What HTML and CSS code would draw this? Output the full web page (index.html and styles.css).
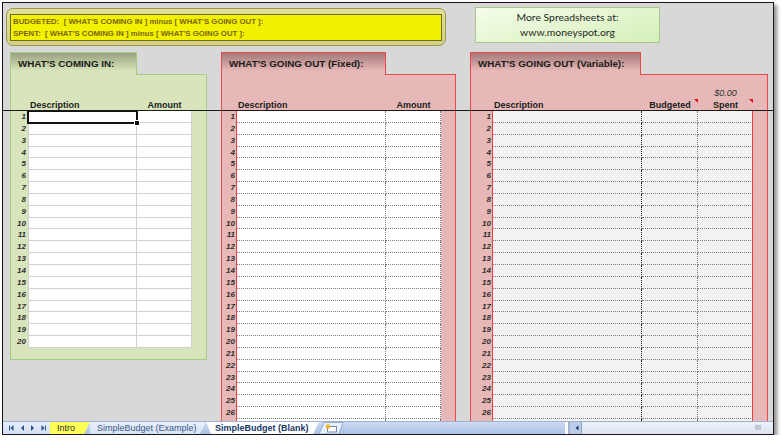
FILE: index.html
```html
<!DOCTYPE html>
<html>
<head>
<meta charset="utf-8">
<title>SimpleBudget (Blank)</title>
<link rel="stylesheet" href="styles.css">
</head>
<body>
<div class="window">
  <div class="sheet">
    <div class="top">
      <div class="formula">
        <div class="formula-inner">
          <div>BUDGETED:&nbsp; [ WHAT'S COMING IN ] minus [ WHAT'S GOING OUT ]:</div>
          <div>SPENT:&nbsp; [ WHAT'S COMING IN ] minus [ WHAT'S GOING OUT ]:</div>
        </div>
      </div>
      <div class="promo">
        <div>More Spreadsheets at:</div>
        <div>www.moneyspot.org</div>
      </div>
    </div>

    <div class="panels">
      <section class="panel income">
        <div class="tab">WHAT'S COMING IN:</div>
        <div class="body">
          <div class="head"><span></span><span class="hd">Description</span><span class="ha">Amount</span></div>
          <div class="rows">
            <div class="r"><span class="n">1</span><span class="c d active"></span><span class="c"></span></div>
            <div class="r"><span class="n">2</span><span class="c d"></span><span class="c"></span></div>
            <div class="r"><span class="n">3</span><span class="c d"></span><span class="c"></span></div>
            <div class="r"><span class="n">4</span><span class="c d"></span><span class="c"></span></div>
            <div class="r"><span class="n">5</span><span class="c d"></span><span class="c"></span></div>
            <div class="r"><span class="n">6</span><span class="c d"></span><span class="c"></span></div>
            <div class="r"><span class="n">7</span><span class="c d"></span><span class="c"></span></div>
            <div class="r"><span class="n">8</span><span class="c d"></span><span class="c"></span></div>
            <div class="r"><span class="n">9</span><span class="c d"></span><span class="c"></span></div>
            <div class="r"><span class="n">10</span><span class="c d"></span><span class="c"></span></div>
            <div class="r"><span class="n">11</span><span class="c d"></span><span class="c"></span></div>
            <div class="r"><span class="n">12</span><span class="c d"></span><span class="c"></span></div>
            <div class="r"><span class="n">13</span><span class="c d"></span><span class="c"></span></div>
            <div class="r"><span class="n">14</span><span class="c d"></span><span class="c"></span></div>
            <div class="r"><span class="n">15</span><span class="c d"></span><span class="c"></span></div>
            <div class="r"><span class="n">16</span><span class="c d"></span><span class="c"></span></div>
            <div class="r"><span class="n">17</span><span class="c d"></span><span class="c"></span></div>
            <div class="r"><span class="n">18</span><span class="c d"></span><span class="c"></span></div>
            <div class="r"><span class="n">19</span><span class="c d"></span><span class="c"></span></div>
            <div class="r"><span class="n">20</span><span class="c d"></span><span class="c"></span></div>
          </div>
        </div>
      </section>

      <section class="panel fixed">
        <div class="tab">WHAT'S GOING OUT (Fixed):</div>
        <div class="body">
          <div class="head"><span></span><span class="hd">Description</span><span class="ha">Amount</span></div>
          <div class="rows">
            <div class="r"><span class="n">1</span><span class="c d"></span><span class="c"></span></div>
            <div class="r"><span class="n">2</span><span class="c d"></span><span class="c"></span></div>
            <div class="r"><span class="n">3</span><span class="c d"></span><span class="c"></span></div>
            <div class="r"><span class="n">4</span><span class="c d"></span><span class="c"></span></div>
            <div class="r"><span class="n">5</span><span class="c d"></span><span class="c"></span></div>
            <div class="r"><span class="n">6</span><span class="c d"></span><span class="c"></span></div>
            <div class="r"><span class="n">7</span><span class="c d"></span><span class="c"></span></div>
            <div class="r"><span class="n">8</span><span class="c d"></span><span class="c"></span></div>
            <div class="r"><span class="n">9</span><span class="c d"></span><span class="c"></span></div>
            <div class="r"><span class="n">10</span><span class="c d"></span><span class="c"></span></div>
            <div class="r"><span class="n">11</span><span class="c d"></span><span class="c"></span></div>
            <div class="r"><span class="n">12</span><span class="c d"></span><span class="c"></span></div>
            <div class="r"><span class="n">13</span><span class="c d"></span><span class="c"></span></div>
            <div class="r"><span class="n">14</span><span class="c d"></span><span class="c"></span></div>
            <div class="r"><span class="n">15</span><span class="c d"></span><span class="c"></span></div>
            <div class="r"><span class="n">16</span><span class="c d"></span><span class="c"></span></div>
            <div class="r"><span class="n">17</span><span class="c d"></span><span class="c"></span></div>
            <div class="r"><span class="n">18</span><span class="c d"></span><span class="c"></span></div>
            <div class="r"><span class="n">19</span><span class="c d"></span><span class="c"></span></div>
            <div class="r"><span class="n">20</span><span class="c d"></span><span class="c"></span></div>
            <div class="r"><span class="n">21</span><span class="c d"></span><span class="c"></span></div>
            <div class="r"><span class="n">22</span><span class="c d"></span><span class="c"></span></div>
            <div class="r"><span class="n">23</span><span class="c d"></span><span class="c"></span></div>
            <div class="r"><span class="n">24</span><span class="c d"></span><span class="c"></span></div>
            <div class="r"><span class="n">25</span><span class="c d"></span><span class="c"></span></div>
            <div class="r"><span class="n">26</span><span class="c d"></span><span class="c"></span></div>
            <div class="r"><span class="n"></span><span class="c d"></span><span class="c"></span></div>
          </div>
        </div>
      </section>

      <section class="panel var">
        <div class="tab">WHAT'S GOING OUT (Variable):</div>
        <div class="body">
          <div class="head">
            <span></span>
            <span class="hd">Description</span>
            <span class="ha"><span class="tri">Budgeted</span></span>
            <span class="ha spent"><span class="cur">$0.00</span><span class="tri">Spent</span></span>
          </div>
          <div class="rows">
            <div class="r"><span class="n">1</span><span class="c d"></span><span class="c"></span><span class="c s"></span></div>
            <div class="r"><span class="n">2</span><span class="c d"></span><span class="c"></span><span class="c s"></span></div>
            <div class="r"><span class="n">3</span><span class="c d"></span><span class="c"></span><span class="c s"></span></div>
            <div class="r"><span class="n">4</span><span class="c d"></span><span class="c"></span><span class="c s"></span></div>
            <div class="r"><span class="n">5</span><span class="c d"></span><span class="c"></span><span class="c s"></span></div>
            <div class="r"><span class="n">6</span><span class="c d"></span><span class="c"></span><span class="c s"></span></div>
            <div class="r"><span class="n">7</span><span class="c d"></span><span class="c"></span><span class="c s"></span></div>
            <div class="r"><span class="n">8</span><span class="c d"></span><span class="c"></span><span class="c s"></span></div>
            <div class="r"><span class="n">9</span><span class="c d"></span><span class="c"></span><span class="c s"></span></div>
            <div class="r"><span class="n">10</span><span class="c d"></span><span class="c"></span><span class="c s"></span></div>
            <div class="r"><span class="n">11</span><span class="c d"></span><span class="c"></span><span class="c s"></span></div>
            <div class="r"><span class="n">12</span><span class="c d"></span><span class="c"></span><span class="c s"></span></div>
            <div class="r"><span class="n">13</span><span class="c d"></span><span class="c"></span><span class="c s"></span></div>
            <div class="r"><span class="n">14</span><span class="c d"></span><span class="c"></span><span class="c s"></span></div>
            <div class="r"><span class="n">15</span><span class="c d"></span><span class="c"></span><span class="c s"></span></div>
            <div class="r"><span class="n">16</span><span class="c d"></span><span class="c"></span><span class="c s"></span></div>
            <div class="r"><span class="n">17</span><span class="c d"></span><span class="c"></span><span class="c s"></span></div>
            <div class="r"><span class="n">18</span><span class="c d"></span><span class="c"></span><span class="c s"></span></div>
            <div class="r"><span class="n">19</span><span class="c d"></span><span class="c"></span><span class="c s"></span></div>
            <div class="r"><span class="n">20</span><span class="c d"></span><span class="c"></span><span class="c s"></span></div>
            <div class="r"><span class="n">21</span><span class="c d"></span><span class="c"></span><span class="c s"></span></div>
            <div class="r"><span class="n">22</span><span class="c d"></span><span class="c"></span><span class="c s"></span></div>
            <div class="r"><span class="n">23</span><span class="c d"></span><span class="c"></span><span class="c s"></span></div>
            <div class="r"><span class="n">24</span><span class="c d"></span><span class="c"></span><span class="c s"></span></div>
            <div class="r"><span class="n">25</span><span class="c d"></span><span class="c"></span><span class="c s"></span></div>
            <div class="r"><span class="n">26</span><span class="c d"></span><span class="c"></span><span class="c s"></span></div>
            <div class="r"><span class="n"></span><span class="c d"></span><span class="c"></span><span class="c s"></span></div>
          </div>
        </div>
      </section>
    </div>
    <div class="freeze"></div>
  </div>

  <div class="tabbar">
    <div class="nav">
      <svg width="47" height="12" viewBox="0 0 47 12">
        <g fill="#2a4f8a">
          <rect x="6" y="3.5" width="1" height="5"/><path d="M10.5 3 L7.5 6 L10.5 9Z"/>
          <path d="M21 3 L18 6 L21 9Z"/>
          <path d="M28 3 L31 6 L28 9Z"/>
          <path d="M38.5 3 L41.5 6 L38.5 9Z"/><rect x="42" y="3.5" width="1" height="5"/>
        </g>
      </svg>
    </div>
    <div class="stab intro"><span class="lbl">Intro</span></div>
    <div class="stab example"><span class="lbl">SimpleBudget (Example)</span></div>
    <div class="stab current"><span class="lbl">SimpleBudget (Blank)</span></div>
    <div class="newtab">
      <svg width="26" height="12" viewBox="0 0 26 12">
        <path d="M0 12 L5 0.5 L24 0.5 L20 12Z" fill="#e9f0fa" stroke="#93abd0"/>
        <rect x="8.5" y="4.5" width="9" height="5.5" fill="#fbfdff" stroke="#7189ad"/>
        <circle cx="9" cy="4.5" r="2.2" fill="#f2b51c"/>
      </svg>
    </div>
    <div class="strip"></div>
    <div class="split"></div>
    <div class="hscroll">
      <span class="sbtn">
        <svg width="8" height="12" viewBox="0 0 8 12"><path d="M5.5 3.5 L2.5 6 L5.5 8.5Z" fill="#1e3f73"/></svg>
      </span>
      <span class="track"><span class="grip"></span></span>
    </div>
  </div>
</div>
</body>
</html>
```

FILE: styles.css
```css
* { box-sizing: border-box; }

body {
  margin: 0;
  background: #ffffff;
  font-family: "Liberation Sans", Arial, sans-serif;
}

.window {
  position: relative;
  margin: 2px 0 0 2px;
  width: 772px;
  height: 433px;
  border: 1px solid #1c1418;
  background: #d8d8d8;
  box-shadow: 3px 3px 4px rgba(0, 0, 0, 0.45);
  display: flex;
  flex-direction: column;
}

.sheet {
  position: relative;
  height: 418px;
  flex-shrink: 0;
  overflow: hidden;
}

/* ---------- top strip ---------- */
.top {
  display: flex;
  align-items: flex-start;
  height: 49px;
  padding: 4px 0 0 3px;
}

.formula {
  margin-top: 1px;
  width: 440px;
  height: 38px;
  border: 1px solid #9a984f;
  border-radius: 7px;
  background: linear-gradient(#e2df9a, #d3cf82);
  padding: 5px 3px 4px 3px;
}

.formula-inner {
  height: 27px;
  border: 1px solid #6b6a2a;
  background: #f2f200;
  padding: 1px 2px;
  font-size: 7.8px;
  font-weight: bold;
  line-height: 11.5px;
  color: #7a6500;
  white-space: nowrap;
}

.promo {
  margin-left: 29px;
  width: 185px;
  height: 36px;
  border: 1px solid #aac58f;
  background: linear-gradient(165deg, #f4fde9, #d5efb9);
  padding-top: 2px;
  text-align: center;
  font-family: Lato, "Liberation Sans", sans-serif;
  font-size: 10.4px;
  line-height: 15px;
  color: #262626;
}

/* ---------- panels ---------- */
.panels {
  display: flex;
  align-items: flex-start;
  gap: 14px;
  padding-left: 7px;
}

.panel .tab {
  position: relative;
  z-index: 1;
  height: 23px;
  margin-bottom: -1px;
  border: 1px solid;
  border-bottom: none;
  padding: 5px 0 0 7px;
  font-size: 9.8px;
  font-weight: bold;
  line-height: 12px;
  color: #1a1a1a;
  white-space: nowrap;
}

.panel .body {
  border: 1px solid;
}

.income { width: 197px; }
.income .tab {
  width: 127px;
  border-color: #a6cd88;
  background: linear-gradient(#98a080 0%, #bcc89e 45%, #d8e4bc 82%);
}
.income .body {
  border-color: #a6cd88;
  background: #d8e4bc;
  padding-bottom: 11px;
}

.fixed { width: 235px; }
.fixed .tab {
  width: 165px;
  border-color: #f04848;
  background: linear-gradient(#a27b7b 0%, #c99b9a 45%, #e6b8b7 82%);
}
.fixed .body {
  border-color: #f04848;
  background: #e6b8b7;
  height: 380px;
}

.var { width: 298px; }
.var .tab {
  width: 171px;
  border-color: #f04848;
  background: linear-gradient(#a27b7b 0%, #c99b9a 45%, #e6b8b7 82%);
}
.var .body {
  border-color: #f04848;
  background: #e6b8b7;
  height: 380px;
}

/* ---------- column headers ---------- */
.head {
  display: grid;
  height: 36px;
  align-items: end;
  padding-bottom: 1px;
  font-size: 9px;
  font-weight: bold;
  line-height: 10px;
  color: #1c1c1c;
  white-space: nowrap;
}

.hd { padding-left: 2px; }
.ha { text-align: center; }

.spent {
  display: flex;
  flex-direction: column;
  align-items: stretch;
}

.cur {
  font-style: italic;
  font-weight: normal;
  color: #333333;
  margin-bottom: 2px;
}

.tri {
  position: relative;
  display: block;
}

.tri::after {
  content: "";
  position: absolute;
  right: 0;
  top: -1px;
  border-top: 4px solid #e01010;
  border-left: 4px solid transparent;
}

/* ---------- rows ---------- */
.r {
  display: grid;
  height: 11.85px;
}

.income .r, .income .head { grid-template-columns: 17px 109px 55px; }
.fixed .r, .fixed .head { grid-template-columns: 14px 150px 55px; }
.var .r, .var .head { grid-template-columns: 21px 150px 56px 55px; }

.n {
  font-size: 8px;
  font-style: italic;
  font-weight: bold;
  line-height: 11px;
  text-align: right;
  padding-right: 2px;
  color: #2e2e2e;
}
.fixed .n, .var .n { padding-right: 1px; }

.income .c {
  background: #ffffff;
  border-right: 1px solid #d0d0d0;
  border-bottom: 1px solid #d0d0d0;
}
.income .d { border-left: 1px solid #d0d0d0; }

.fixed .c {
  background: #ffffff;
  border-right: 1px dotted #7c7c7c;
  border-bottom: 1px dotted #7c7c7c;
}
.fixed .d { border-left: 1px solid #ee3d3d; }

.var .c {
  background: #f2f2f2;
  border-right: 1px dotted #7c7c7c;
  border-bottom: 1px dotted #7c7c7c;
}
.var .d {
  border-left: 1px solid #ee3d3d;
  border-right: 1px dotted #1e1e1e;
}
.var .s { border-right: 1px solid #ee3d3d; }

.active {
  position: relative;
  outline: 2px solid #111111;
  outline-offset: -1px;
}
.active::after {
  content: "";
  position: absolute;
  right: -3px;
  bottom: -3px;
  width: 4px;
  height: 4px;
  background: #111111;
  border: 1px solid #ffffff;
  box-sizing: content-box;
  margin: -1px;
}

.freeze {
  position: absolute;
  left: 0;
  right: 0;
  top: 107px;
  height: 1px;
  background: #1a1a1a;
  z-index: 3;
}

/* ---------- sheet tab bar ---------- */
.tabbar {
  height: 13px;
  flex-shrink: 0;
  display: flex;
  background: linear-gradient(#cddcf1, #a9c1e5);
  border-top: 1px solid #9fb3d1;
  font-size: 9px;
  line-height: 12px;
  white-space: nowrap;
}

.tabbar > * { flex-shrink: 0; }

.nav {
  width: 47px;
  background: linear-gradient(#e6eef9, #d3e0f3);
}
.nav svg { display: block; }

.stab {
  height: 12px;
  padding-left: 7px;
  clip-path: polygon(0 0, 100% 0, calc(100% - 6px) 100%, 0 100%);
}

.lbl { display: inline-block; line-height: 12px; }

.intro {
  width: 40px;
  background: #ffff5a;
  color: #2b2b2b;
}

.example {
  width: 116px;
  background: linear-gradient(#e9f0fa, #d6e2f3);
  color: #3d5a88;
}

.current {
  width: 113px;
  padding-left: 9px;
  background: #ffffff;
  color: #18366a;
  font-weight: bold;
  clip-path: polygon(0 0, 100% 0, calc(100% - 6px) 100%, 5px 100%);
}

.newtab { width: 26px; }
.newtab svg { display: block; }

.strip { flex: 1 1 auto; flex-shrink: 1; }

.split {
  width: 5px;
  background: linear-gradient(90deg, #ffffff 0, #ffffff 3px, #9fb3d1 3px);
}

.hscroll {
  width: 203px;
  display: flex;
  background: #b9cce9;
}

.sbtn {
  width: 12px;
  padding-left: 3px;
  border-right: 1px solid #8ea4c6;
}
.sbtn svg { display: block; }

.track {
  flex: 1;
  position: relative;
  background: linear-gradient(#eef2f8, #dbe3ef);
}

.grip {
  position: absolute;
  right: 12px;
  top: 3px;
  width: 6px;
  height: 5px;
  background: #c2c8d2;
}
```
